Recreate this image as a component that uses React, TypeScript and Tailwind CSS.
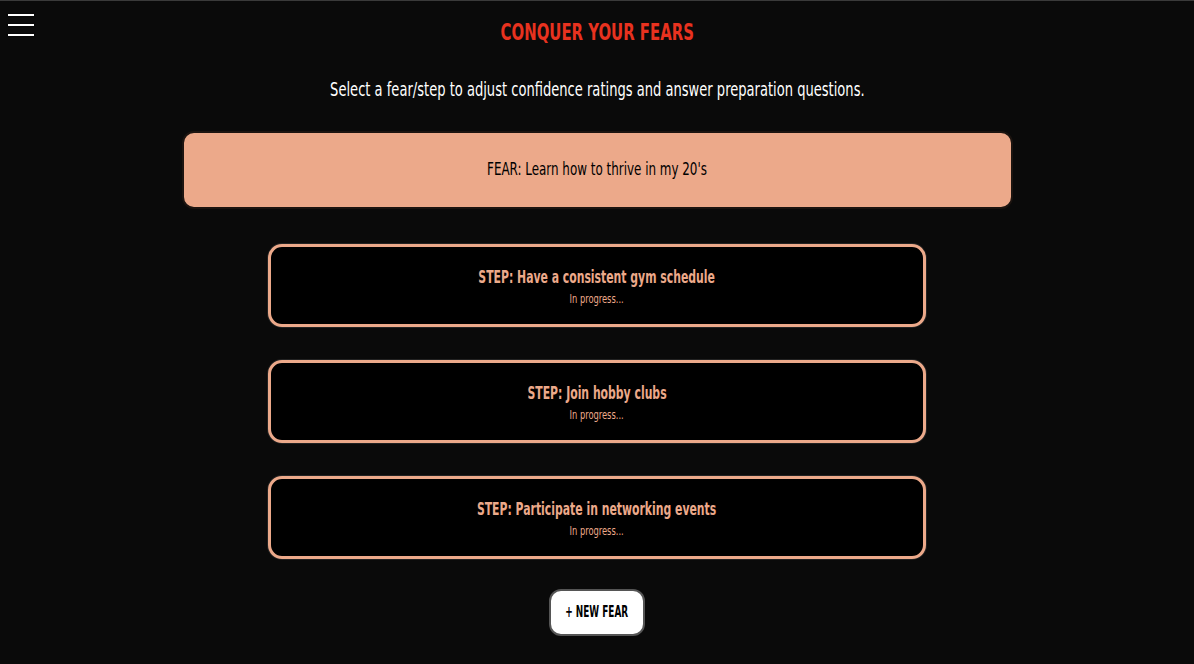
import type { ReactNode } from "react";

const STEPS = [
  "Have a consistent gym schedule",
  "Join hobby clubs",
  "Participate in networking events",
];

const FONT = "font-['DejaVu_Sans_Condensed','DejaVu_Sans',sans-serif]";

// squeeze the condensed face a bit further so it sits closer to a narrow display font
function Narrow({ children, className = "scale-x-[0.78]" }: { children: ReactNode; className?: string }) {
  return <span className={`inline-block whitespace-nowrap ${className}`}>{children}</span>;
}

function MenuIcon() {
  return (
    <button type="button" className="flex w-[26px] flex-col gap-[8px]">
      <span className="h-[2px] w-full bg-white shadow-[0_0_2px_#000]" />
      <span className="h-[2px] w-full bg-white shadow-[0_0_2px_#000]" />
      <span className="h-[2px] w-full bg-white shadow-[0_0_2px_#000]" />
    </button>
  );
}

function StepCard({ title }: { title: string }) {
  return (
    <button
      type="button"
      className="flex h-[83px] w-[658px] flex-col items-center justify-center rounded-[14px] border-[3px] border-[#eca98a] bg-black shadow-[0_0_0_1px_#222]"
    >
      <Narrow className="scale-x-[0.71] text-[17px] font-bold leading-[22px] text-[#eca98a] [text-shadow:0_0_2px_#000]">
        STEP: {title}
      </Narrow>
      <Narrow className="mt-[4px] scale-x-[0.74] text-[12.5px] leading-[14px] text-[#eca98a]">
        In progress...
      </Narrow>
    </button>
  );
}

export default function App() {
  return (
    <div className={`min-h-[664px] w-full border-t border-[#3a3a3a] bg-[#0a0a0a] ${FONT}`}>
      <div className="relative">
        <div className="absolute left-[8px] top-[13px]">
          <MenuIcon />
        </div>
      </div>
      <h1 className="pt-[17px] text-center text-[23px] font-bold leading-[28px] text-[#e8321f]">
        <Narrow className="scale-x-[0.72]">CONQUER YOUR FEARS</Narrow>
      </h1>
      <p className="mt-[31px] text-center text-[19px] leading-[24px] text-white">
        <Narrow className="scale-x-[0.765]">
          Select a fear/step to adjust confidence ratings and answer preparation questions.
        </Narrow>
      </p>
      <div className="mt-[30px] flex flex-col items-center">
        <button
          type="button"
          className="flex h-[78px] w-[831px] items-center justify-center rounded-[12px] border-2 border-[#1c1410] bg-[#eca98a] text-[17px] text-black"
        >
          <Narrow>FEAR: Learn how to thrive in my 20's</Narrow>
        </button>
        <div className="mt-[35px] flex flex-col items-center gap-[33px]">
          {STEPS.map((step) => (
            <StepCard key={step} title={step} />
          ))}
        </div>
        <button
          type="button"
          className="mt-[30px] flex h-[47px] w-[96px] items-center justify-center rounded-[12px] border-2 border-[#555] bg-white text-[15px] text-black"
        >
          <Narrow className="scale-x-[0.66] font-bold">+ NEW FEAR</Narrow>
        </button>
      </div>
    </div>
  );
}
